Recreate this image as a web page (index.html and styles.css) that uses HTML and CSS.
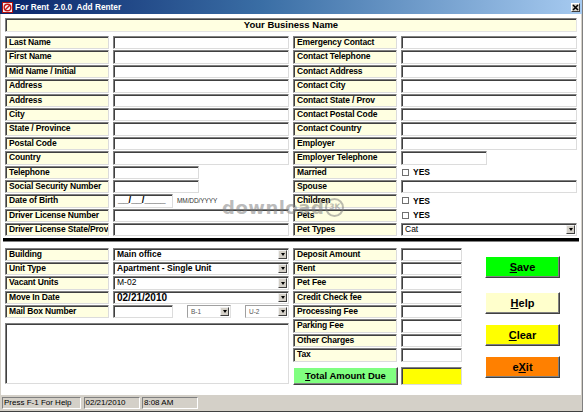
FILE: index.html
```html
<!DOCTYPE html>
<html>
<head>
<meta charset="utf-8">
<title>For Rent 2.0.0 Add Renter</title>
<link rel="stylesheet" href="styles.css">
</head>
<body>
<div class="window">
  <div class="titlebar">
    <svg class="appicon" width="11" height="11" viewBox="0 0 11 11">
      <rect x="0.5" y="0.5" width="10" height="10" fill="#f4f0f0" stroke="#b01010"/>
      <circle cx="5.5" cy="5.5" r="3.3" fill="none" stroke="#c81818" stroke-width="1.4"/>
      <line x1="3" y1="8" x2="8" y2="3" stroke="#c81818" stroke-width="1.4"/>
    </svg>
    <span class="title">For Rent  2.0.0  Add Renter</span>
    <div class="closebtn">
      <svg width="7" height="7" viewBox="0 0 7 7"><path d="M1 1 L6 6 M6 1 L1 6" stroke="#000" stroke-width="1.6"/></svg>
    </div>
  </div>

  <div class="client">
    <div class="header">Your Business Name</div>

    <div class="form-grid">
      <div class="lbl">Last Name</div><div class="fld"></div>
      <div class="lbl">Emergency Contact</div><div class="fld"></div>

      <div class="lbl">First Name</div><div class="fld"></div>
      <div class="lbl">Contact Telephone</div><div class="fld"></div>

      <div class="lbl">Mid Name / Initial</div><div class="fld"></div>
      <div class="lbl">Contact Address</div><div class="fld"></div>

      <div class="lbl">Address</div><div class="fld"></div>
      <div class="lbl">Contact City</div><div class="fld"></div>

      <div class="lbl">Address</div><div class="fld"></div>
      <div class="lbl">Contact State / Prov</div><div class="fld"></div>

      <div class="lbl">City</div><div class="fld"></div>
      <div class="lbl">Contact Postal Code</div><div class="fld"></div>

      <div class="lbl">State / Province</div><div class="fld"></div>
      <div class="lbl">Contact Country</div><div class="fld"></div>

      <div class="lbl">Postal Code</div><div class="fld"></div>
      <div class="lbl">Employer</div><div class="fld"></div>

      <div class="lbl">Country</div><div class="fld"></div>
      <div class="lbl">Employer Telephone</div><div class="fld short"></div>

      <div class="lbl">Telephone</div><div class="fld short"></div>
      <div class="lbl">Married</div><div class="check"><span class="box"></span>YES</div>

      <div class="lbl">Social Security Number</div><div class="fld short"></div>
      <div class="lbl">Spouse</div><div class="fld"></div>

      <div class="lbl">Date of Birth</div>
      <div class="dob"><div class="fld dob-fld">__/__/____</div><span class="hint">MM/DD/YYYY</span></div>
      <div class="lbl">Children</div><div class="check"><span class="box"></span>YES</div>

      <div class="lbl">Driver License Number</div><div class="fld"></div>
      <div class="lbl">Pets</div><div class="check"><span class="box"></span>YES</div>

      <div class="lbl">Driver License State/Prov</div><div class="fld"></div>
      <div class="lbl">Pet Types</div>
      <div class="sel"><span class="sel-text">Cat</span><span class="arrow"></span></div>
    </div>

    <div class="divider"></div>

    <div class="lower">
      <div class="lower-left">
        <div class="pair-grid">
          <div class="lbl">Building</div>
          <div class="sel"><span class="sel-text strong">Main office</span><span class="arrow"></span></div>
          <div class="lbl">Unit Type</div>
          <div class="sel"><span class="sel-text strong">Apartment - Single Unit</span><span class="arrow"></span></div>
          <div class="lbl">Vacant Units</div>
          <div class="sel"><span class="sel-text">M-02</span><span class="arrow"></span></div>
          <div class="lbl">Move In Date</div>
          <div class="sel"><span class="sel-text date">02/21/2010</span><span class="arrow"></span></div>
          <div class="lbl">Mail Box Number</div>
          <div class="mailrow">
            <div class="fld mailbox"></div>
            <div class="sel mini"><span class="sel-text tiny">B-1</span><span class="arrow"></span></div>
            <div class="sel mini"><span class="sel-text tiny">U-2</span><span class="arrow"></span></div>
          </div>
        </div>
        <div class="memo"></div>
      </div>

      <div class="fees">
        <div class="fee-grid">
          <div class="lbl">Deposit Amount</div><div class="fld"></div>
          <div class="lbl">Rent</div><div class="fld"></div>
          <div class="lbl">Pet Fee</div><div class="fld"></div>
          <div class="lbl">Credit Check fee</div><div class="fld"></div>
          <div class="lbl">Processing Fee</div><div class="fld"></div>
          <div class="lbl">Parking Fee</div><div class="fld"></div>
          <div class="lbl">Other Charges</div><div class="fld"></div>
          <div class="lbl">Tax</div><div class="fld"></div>
        </div>
        <div class="total-row">
          <div class="total-btn"><u>T</u>otal Amount Due</div>
          <div class="total-val"></div>
        </div>
      </div>

      <div class="buttons">
        <div class="btn btn-save"><u>S</u>ave</div>
        <div class="btn btn-help"><u>H</u>elp</div>
        <div class="btn btn-clear"><u>C</u>lear</div>
        <div class="btn btn-exit">e<u>X</u>it</div>
      </div>
    </div>

    <div class="watermark">download<span class="wm-circle">3K</span></div>
  </div>

  <div class="statusbar">
    <div class="panel p-help">Press F-1 For Help</div>
    <div class="panel p-date">02/21/2010</div>
    <div class="panel p-time">8:08 AM</div>
  </div>
</div>
</body>
</html>
```
FILE: styles.css
```css
* { box-sizing: border-box; }
html, body { margin: 0; padding: 0; }
body {
  width: 583px;
  height: 412px;
  overflow: hidden;
  background: #d4d0c8;
  font-family: "Liberation Sans", Arial, sans-serif;
  color: #000;
}
.window {
  width: 583px;
  height: 412px;
  display: flex;
  flex-direction: column;
  border-right: 1px solid #808080;
  border-bottom: 1px solid #404040;
}

/* title bar */
.titlebar {
  height: 14px;
  flex: none;
  display: flex;
  align-items: center;
  padding: 0 2px 0 2px;
  background: linear-gradient(to right, #0a246a 0%, #3a6ea5 45%, #a6caf0 100%);
}
.appicon { flex: none; }
.title {
  flex: 1;
  margin-left: 2px;
  color: #fff;
  font-weight: bold;
  font-size: 8.3px;
  white-space: pre;
  line-height: 14px;
}
.closebtn {
  width: 9px;
  height: 9px;
  background: #d4d0c8;
  border: 1px solid;
  border-color: #fff #404040 #404040 #fff;
  display: flex;
  align-items: center;
  justify-content: center;
}

/* client area */
.client {
  flex: 1;
  position: relative;
  background: #fff;
  margin: 0 1px 0 1px;
  padding: 3.7px 4px 0 4px;
}
.header {
  height: 14px;
  background: #ffffe1;
  border: 1px solid;
  border-color: #808080 #e4e4e4 #e4e4e4 #808080;
  box-shadow: inset 1px 1px 0 #404040;
  text-align: center;
  font-weight: bold;
  font-size: 9.5px;
  line-height: 12px;
}

.lbl, .fld, .sel, .memo, .total-val {
  border: 1px solid;
  border-color: #808080 #dcdcdc #dcdcdc #808080;
  box-shadow: inset 1px 1px 0 #404040;
}
.lbl {
  background: #ffffe1;
  font-weight: bold;
  font-size: 8.5px;
  letter-spacing: -0.15px;
  line-height: 11px;
  padding-left: 3px;
  white-space: nowrap;
  overflow: hidden;
}
.fld { background: #fff; }
.fld.short { width: 86px; }

.form-grid {
  margin-top: 4.3px;
  display: grid;
  grid-template-columns: 104px 176px 104px 176px;
  column-gap: 4px;
  grid-auto-rows: 13.4px;
  row-gap: 1px;
}

.dob { display: flex; align-items: center; }
.dob-fld {
  width: 60px;
  height: 100%;
  font-weight: bold;
  font-size: 9.5px;
  line-height: 10px;
  padding-left: 4px;
}
.hint {
  margin-left: 4px;
  font-size: 6.5px;
  color: #333;
  letter-spacing: -0.1px;
}

.check {
  display: flex;
  align-items: center;
  font-weight: bold;
  font-size: 8.5px;
}
.box {
  width: 7px;
  height: 7px;
  margin-left: 1px;
  margin-right: 4px;
  border: 1px solid #707070;
  background: #fff;
}

.sel {
  display: flex;
  align-items: stretch;
  background: #fff;
  padding: 1px 1px 1px 0;
}
.sel-text {
  flex: 1;
  padding-left: 3px;
  font-size: 8.5px;
  line-height: 9px;
  white-space: nowrap;
  overflow: hidden;
}
.sel-text.strong { font-weight: bold; }
.sel-text.date { font-weight: bold; font-size: 10px; }
.sel-text.tiny { font-size: 6.5px; color: #555; }
.arrow {
  width: 9px;
  flex: none;
  background: #d4d0c8;
  border: 1px solid;
  border-color: #f0f0f0 #404040 #404040 #f0f0f0;
  display: flex;
  align-items: center;
  justify-content: center;
}
.arrow::after {
  content: "";
  width: 0;
  height: 0;
  border-left: 2.5px solid transparent;
  border-right: 2.5px solid transparent;
  border-top: 3px solid #000;
}

.divider {
  margin: 1.4px -2px 0 -2px;
  height: 4px;
  border-top: 3px solid #000;
  border-bottom: 1px solid #808080;
}

/* lower section */
.lower {
  margin-top: 5.7px;
  display: flex;
  align-items: flex-start;
}
.lower-left { width: 284px; margin-right: 4px; }
.pair-grid {
  display: grid;
  grid-template-columns: 104px 176px;
  column-gap: 4px;
  grid-auto-rows: 13.4px;
  row-gap: 1px;
}
.mailrow {
  display: flex;
  justify-content: space-between;
  align-items: stretch;
}
.mailbox { width: 60px; }
.sel.mini { width: 44px; border-color: #a0a0a0 #e0e0e0 #e0e0e0 #a0a0a0; box-shadow: none; }
.memo {
  margin-top: 4.3px;
  height: 61px;
  background: #fff;
}

.fees { width: 169px; }
.fee-grid {
  display: grid;
  grid-template-columns: 104px 61px;
  column-gap: 4px;
  grid-auto-rows: 13.4px;
  row-gap: 1px;
}
.total-row {
  margin-top: 5px;
  display: flex;
  gap: 3px;
  height: 18px;
}
.total-btn {
  width: 105px;
  background: #80ff80;
  border: 1px solid;
  border-color: #fff #404040 #404040 #fff;
  box-shadow: inset -1px -1px 0 #808080;
  font-weight: bold;
  font-size: 9.5px;
  line-height: 16px;
  text-align: center;
}
.total-val { width: 61px; background: #ffff00; }

.buttons {
  margin-left: 23px;
  width: 75px;
  padding-top: 8.3px;
  display: flex;
  flex-direction: column;
  gap: 10.3px;
}
.btn {
  height: 22px;
  border: 1px solid;
  border-color: #fff #404040 #404040 #fff;
  box-shadow: inset -1px -1px 0 #808080;
  font-weight: bold;
  font-size: 11px;
  line-height: 20px;
  text-align: center;
}
.btn-save { background: #00ff00; margin-bottom: 3.4px; }
.btn-help { background: #ffffcc; }
.btn-clear { background: #ffff00; }
.btn-exit { background: #ff8000; }

/* watermark overlay */
.watermark {
  position: absolute;
  left: 221px;
  top: 184px;
  font-family: "DejaVu Sans", "Liberation Sans", sans-serif;
  font-size: 18px;
  font-weight: bold;
  letter-spacing: 0.5px;
  line-height: 18px;
  color: rgba(120, 120, 120, 0.5);
  display: flex;
  align-items: center;
  pointer-events: none;
}
.wm-circle {
  width: 19px;
  height: 19px;
  margin-left: 1px;
  border: 2.5px solid rgba(120, 120, 120, 0.5);
  border-radius: 50%;
  font-size: 7.5px;
  letter-spacing: 0;
  line-height: 14px;
  text-align: center;
}

/* status bar */
.statusbar {
  height: 16px;
  flex: none;
  display: flex;
  gap: 2.5px;
  padding: 2px 0 0 2px;
  background: #d4d0c8;
}
.panel {
  height: 12px;
  border: 1px solid;
  border-color: #808080 #fff #fff #808080;
  font-size: 8px;
  line-height: 10px;
  padding-left: 1px;
  white-space: nowrap;
  color: #000;
}
.p-help { width: 79px; }
.p-date { width: 56px; }
.p-time { width: 56px; }
```
